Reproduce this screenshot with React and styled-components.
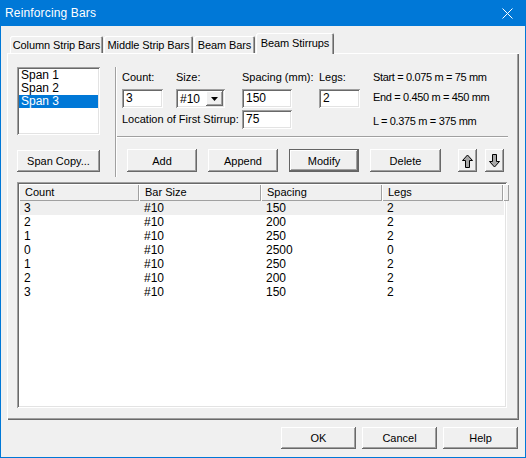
import React from 'react';
import styled, { createGlobalStyle, css } from 'styled-components';

const Global = createGlobalStyle`
  html, body { margin: 0; padding: 0; background: #f0f0f0; }
  body { font-family: "Liberation Sans", Arial, sans-serif; font-size: 11px; color: #000; }
  * { box-sizing: border-box; }
`;

const raised = css`
  background: #f0f0f0;
  box-shadow: inset -1px -1px #696969, inset 1px 1px #fff, inset -2px -2px #a0a0a0;
`;
const sunken = css`
  background: #fff;
  box-shadow: inset 1px 1px #a0a0a0, inset -1px -1px #fff, inset 2px 2px #696969, inset -2px -2px #e3e3e3;
`;

const Window = styled.div`
  width: 526px;
  height: 458px;
  border: 1px solid #0078d7;
  background: #f0f0f0;
  display: flex;
  flex-direction: column;
`;

const TitleBar = styled.div`
  height: 25px;
  background: #0078d7;
  color: #fff;
  display: flex;
  align-items: center;
  justify-content: space-between;
  padding: 0 12px 1px 4px;
  font-family: "Segoe UI", "Liberation Sans", Arial, sans-serif;
  font-size: 12px;
  letter-spacing: 0.15px;
`;

const Body = styled.div`
  flex: 1;
  display: flex;
  flex-direction: column;
  padding: 7px 6px 0 6px;
`;

const TabRow = styled.div`
  display: flex;
  align-items: flex-end;
  height: 20px;
  padding-left: 3px;
  gap: 1px;
  position: relative;
  z-index: 1;
`;

const Tab = styled.div`
  width: ${p => p.$w}px;
  height: ${p => (p.$active ? 21 : 17)}px;
  margin-bottom: ${p => (p.$active ? -1 : 0)}px;
  background: #f0f0f0;
  display: flex;
  align-items: center;
  justify-content: center;
  padding-bottom: ${p => (p.$active ? 2 : 0)}px;
  border-top-left-radius: 2px;
  border-top-right-radius: 2px;
  box-shadow: inset 1px 1px #fff, inset -1px 0 #696969, inset -2px 0 #a0a0a0;
  white-space: nowrap;
  letter-spacing: -0.1px;
`;

const Panel = styled.div`
  height: 367px;
  padding: 14px 12px 12px 10px;
  display: flex;
  flex-direction: column;
  box-shadow: inset 1px 1px #fff, inset -1px -1px #696969, inset -2px -2px #a0a0a0;
`;

const TopSection = styled.div`
  display: flex;
  height: 110px;
`;

const LeftCol = styled.div`
  width: 83px;
  display: flex;
  flex-direction: column;
  gap: 15px;
`;

const ListBox = styled.div`
  ${sunken};
  height: 68px;
  padding: 2px;
`;

const ListItem = styled.div`
  height: 13px;
  line-height: 13px;
  padding-left: 2px;
  font-size: 12px;
  background: ${p => (p.$selected ? '#0078d7' : 'transparent')};
  color: ${p => (p.$selected ? '#fff' : '#000')};
`;

const Button = styled.div`
  ${raised};
  width: ${p => p.$w}px;
  height: ${p => p.$h || 23}px;
  display: flex;
  align-items: center;
  justify-content: center;
  flex-shrink: 0;
  ${p => p.$default && css`
    box-shadow: inset 0 0 0 1px #646464, inset -2px -2px #696969, inset 2px 2px #fff, inset -3px -3px #a0a0a0;
  `}
`;

const VSep = styled.div`
  width: 2px;
  margin-left: 15px;
  border-left: 1px solid #a0a0a0;
  border-right: 1px solid #fff;
`;

const RightArea = styled.div`
  flex: 1;
  display: flex;
  flex-direction: column;
  margin-right: -1px;
`;

const FieldsGrid = styled.div`
  display: grid;
  grid-template-columns: 54px 66px 77px 54px 1fr;
  grid-template-rows: 22px 21px 19px;
  padding-left: 5px;
`;

const Label = styled.div`
  line-height: 13px;
  padding-top: 4px;
  white-space: nowrap;
  ${p => p.$span && css`grid-column: 1 / span ${p.$span}; align-self: center; padding-top: 0;`}
`;

const Edit = styled.div`
  ${sunken};
  width: ${p => p.$w}px;
  height: ${p => p.$h || 19}px;
  padding: 3px 0 0 4px;
  line-height: 13px;
  font-size: 12px;
`;

const Select = styled.div`
  ${sunken};
  width: 49px;
  height: 19px;
  display: flex;
  align-items: center;
  justify-content: space-between;
  padding: 2px;
  font-size: 12px;
`;

const SelectValue = styled.span`
  padding-left: 2px;
`;

const SelectArrow = styled.div`
  ${raised};
  width: 17px;
  height: 15px;
  display: flex;
  align-items: center;
  justify-content: center;
`;

const Info = styled.div`
  grid-column: 5;
  grid-row: 1 / span 3;
  display: flex;
  flex-direction: column;
  padding-top: 4px;
  letter-spacing: -0.35px;
`;

const InfoLine = styled.div`
  line-height: 13px;
  margin-top: ${p => p.$gap || 0}px;
  white-space: nowrap;
`;

const HSep = styled.div`
  height: 2px;
  margin-top: 7px;
  border-top: 1px solid #a0a0a0;
  border-bottom: 1px solid #fff;
`;

const ButtonRow = styled.div`
  display: flex;
  margin-top: 11px;
  padding-left: 10px;
  gap: 11px;
`;

const ArrowGroup = styled.div`
  display: flex;
  gap: 8px;
  margin-left: 6px;
`;

const Table = styled.div`
  ${sunken};
  margin-top: 5px;
  flex: 1;
  padding: 2px;
  display: flex;
  flex-direction: column;
`;

const HeaderRow = styled.div`
  display: grid;
  grid-template-columns: 120px 122px 121px 121px 1fr;
  height: 17px;
`;

const HeaderCell = styled.div`
  line-height: 16px;
  padding-left: 6px;
  background: #f0f0f0;
  box-shadow: inset 1px 1px #fff, inset -1px -1px #a0a0a0;
`;

const Row = styled.div`
  display: grid;
  grid-template-columns: 120px 122px 121px 121px;
  height: 14px;
  line-height: 14px;
  width: 484px;
  margin-left: 1px;
  background: ${p => (p.$hot ? '#efefef' : '#fff')};
`;

const Cell = styled.div`
  padding-left: 4px;
  font-size: 12px;
`;

const Footer = styled.div`
  display: flex;
  justify-content: flex-end;
  gap: 6px;
  margin-top: 7px;
  padding-right: 1px;
`;

const Close = () => (
  <svg width="11" height="11" viewBox="0 0 11 11">
    <path d="M0.5 0.5 L10.5 10.5 M10.5 0.5 L0.5 10.5" stroke="#fff" strokeWidth="1" />
  </svg>
);

const Tri = () => (
  <svg width="7" height="4" viewBox="0 0 7 4">
    <path d="M0 0 H7 L3.5 4 Z" fill="#000" />
  </svg>
);

const Arrow = ({ down }) => (
  <svg width="11" height="14" viewBox="0 0 11 14">
    <path
      d={down ? 'M3.5 0.5 H7.5 V7.5 H10.5 L5.5 13 L0.5 7.5 H3.5 Z' : 'M5.5 1 L10.5 6.5 H7.5 V13.5 H3.5 V6.5 H0.5 Z'}
      fill="#a8a8a8"
      stroke="#000"
      strokeWidth="1"
      strokeLinejoin="miter"
    />
  </svg>
);

const tabs = [
  { label: 'Column Strip Bars', w: 93 },
  { label: 'Middle Strip Bars', w: 89 },
  { label: 'Beam Bars', w: 61 },
  { label: 'Beam Stirrups', w: 78, active: true },
];

const rows = [
  ['3', '#10', '150', '2'],
  ['2', '#10', '200', '2'],
  ['1', '#10', '250', '2'],
  ['0', '#10', '2500', '0'],
  ['1', '#10', '250', '2'],
  ['2', '#10', '200', '2'],
  ['3', '#10', '150', '2'],
];

export default function App() {
  return (
    <>
      <Global />
      <Window>
        <TitleBar>
          <span>Reinforcing Bars</span>
          <Close />
        </TitleBar>
        <Body>
          <TabRow>
            {tabs.map(t => (
              <Tab key={t.label} $w={t.w} $active={t.active}>{t.label}</Tab>
            ))}
          </TabRow>
          <Panel>
            <TopSection>
              <LeftCol>
                <ListBox>
                  <ListItem>Span 1</ListItem>
                  <ListItem>Span 2</ListItem>
                  <ListItem $selected>Span 3</ListItem>
                </ListBox>
                <Button $w={83} $h={22}>Span Copy...</Button>
              </LeftCol>
              <VSep />
              <RightArea>
                <FieldsGrid>
                  <Label>Count:</Label>
                  <Label>Size:</Label>
                  <Label>Spacing (mm):</Label>
                  <Label>Legs:</Label>
                  <Info>
                    <InfoLine>Start = 0.075 m = 75 mm</InfoLine>
                    <InfoLine $gap={7}>End = 0.450 m = 450 mm</InfoLine>
                    <InfoLine $gap={11}>L = 0.375 m = 375 mm</InfoLine>
                  </Info>
                  <Edit $w={41}>3</Edit>
                  <Select>
                    <SelectValue>#10</SelectValue>
                    <SelectArrow><Tri /></SelectArrow>
                  </Select>
                  <Edit $w={50}>150</Edit>
                  <Edit $w={41}>2</Edit>
                  <Label $span={2}>Location of First Stirrup:</Label>
                  <Edit $w={50} $h={19}>75</Edit>
                </FieldsGrid>
                <HSep />
                <ButtonRow>
                  <Button $w={70}>Add</Button>
                  <Button $w={70}>Append</Button>
                  <Button $w={70} $default>Modify</Button>
                  <Button $w={71}>Delete</Button>
                  <ArrowGroup>
                    <Button $w={19}><Arrow /></Button>
                    <Button $w={19}><Arrow down /></Button>
                  </ArrowGroup>
                </ButtonRow>
              </RightArea>
            </TopSection>
            <Table>
              <HeaderRow>
                <HeaderCell>Count</HeaderCell>
                <HeaderCell>Bar Size</HeaderCell>
                <HeaderCell>Spacing</HeaderCell>
                <HeaderCell>Legs</HeaderCell>
                <HeaderCell />
              </HeaderRow>
              {rows.map((r, i) => (
                <Row key={i} $hot={i === 0}>
                  {r.map((c, j) => <Cell key={j}>{c}</Cell>)}
                </Row>
              ))}
            </Table>
          </Panel>
          <Footer>
            <Button $w={75} $h={22}>OK</Button>
            <Button $w={75} $h={22}>Cancel</Button>
            <Button $w={75} $h={22}>Help</Button>
          </Footer>
        </Body>
      </Window>
    </>
  );
}
